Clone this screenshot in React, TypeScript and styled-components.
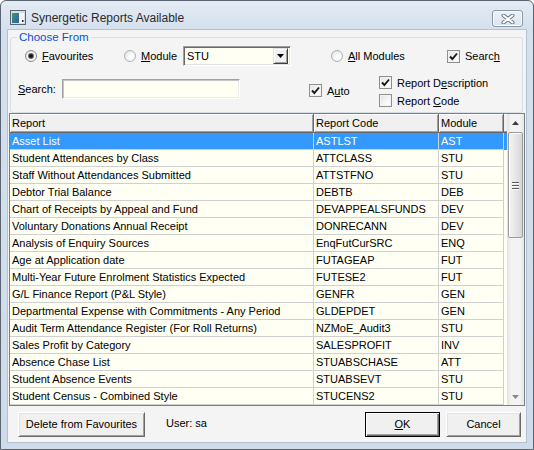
import styled, { createGlobalStyle } from "styled-components";

const GlobalStyle = createGlobalStyle`
  html, body { margin: 0; padding: 0; background: #ffffff; }
  body { font-family: "Liberation Sans", Arial, sans-serif; font-size: 11px; color: #000; }
  * { box-sizing: border-box; }
`;

const Window = styled.div`
  width: 534px;
  height: 450px;
  border: 1px solid #5b6470;
  border-radius: 6px 6px 0 0;
  background: linear-gradient(#e3ebf4, #d4e0ed 30px, #cedbea);
  padding: 0 7px 7px;
  display: flex;
  flex-direction: column;
`;

const TitleBar = styled.div`
  height: 29px;
  padding-top: 4px;
  display: flex;
  align-items: center;
  flex: none;
`;

const TitleText = styled.span`
  margin-left: 5px;
  font-size: 12px;
  color: #2a2a2a;
`;

const CloseButton = styled.div`
  margin-left: auto;
  margin-right: 3px;
  align-self: flex-start;
  margin-top: 5px;
  width: 31px;
  height: 17px;
  border: 1px solid #8b98a9;
  border-radius: 3px;
  background: linear-gradient(#eef2f7, #dbe3ec);
  box-shadow: inset 0 0 0 1px #f7f9fc;
  display: flex;
  align-items: center;
  justify-content: center;
`;

const Client = styled.div`
  flex: 1;
  background: #f4f4f4;
  box-shadow: 0 0 0 1px #b3c2d3;
  display: flex;
  flex-direction: column;
  padding: 0 1px;
`;

const GroupBox = styled.fieldset`
  margin: 0 2px 0 1px;
  padding: 0 0 2px;
  border: 1px solid #d5dfe5;
  border-radius: 3px;
  min-width: 0;
  flex: none;
`;

const GroupLegend = styled.legend`
  margin-left: 6px;
  padding: 0 2px;
  color: #0a4fd6;
  font-size: 11.5px;
  line-height: 14px;
`;

const OptionRow = styled.div`
  display: flex;
  align-items: center;
  height: 20px;
  margin-top: 2px;
  padding-left: 14px;
`;

const SearchRow = styled.div`
  display: flex;
  align-items: flex-start;
  height: 35px;
  margin-top: 9px;
  padding-left: 7px;
`;

const Option = styled.label<{ $w?: number; $ml?: number; $mt?: number }>`
  display: flex;
  align-items: center;
  gap: 5px;
  flex: none;
  width: ${(p) => (p.$w ? `${p.$w}px` : "auto")};
  margin-left: ${(p) => p.$ml ?? 0}px;
  margin-top: ${(p) => p.$mt ?? 0}px;
  height: 13px;
`;

const OptionStack = styled.div`
  display: flex;
  flex-direction: column;
  gap: 5px;
  margin-top: 1px;
`;

const Key = styled.span`
  text-decoration: underline;
`;

const RadioCircle = styled.span<{ $on?: boolean }>`
  width: 12px;
  height: 12px;
  flex: none;
  border-radius: 50%;
  border: 1px solid ${(p) => (p.$on ? "#8a8a8a" : "#b0b0b0")};
  background: radial-gradient(circle at 65% 65%, #ffffff 20%, #e2e2e2 90%);
  display: flex;
  align-items: center;
  justify-content: center;
`;

const RadioDot = styled.span`
  width: 4px;
  height: 4px;
  border-radius: 50%;
  background: #151515;
  box-shadow: 0 0 0 1px #6d6d6d;
`;

const CheckBox = styled.span`
  width: 13px;
  height: 13px;
  flex: none;
  border: 1px solid #8e8f8f;
  background: linear-gradient(135deg, #e1e1e1, #fbfbfb 70%);
  box-shadow: inset 0 0 0 1px #f2f2f2;
  display: flex;
  align-items: center;
  justify-content: center;
`;

const Combo = styled.div`
  width: 108px;
  height: 20px;
  margin-left: 0;
  display: flex;
  align-items: center;
  background: #fffff4;
  border: 1px solid;
  border-color: #a0a0a0 #ffffff #ffffff #a0a0a0;
  box-shadow: inset 1px 1px #696969, inset -1px -1px #e3e3e3;
  padding: 2px 2px 2px 3px;
`;

const ComboText = styled.span`
  flex: 1;
`;

const DropButton = styled.span`
  width: 15px;
  height: 16px;
  background: #f0f0f0;
  border: 1px solid;
  border-color: #e3e3e3 #404040 #404040 #e3e3e3;
  box-shadow: inset 1px 1px #ffffff, inset -1px -1px #a0a0a0;
  display: flex;
  align-items: center;
  justify-content: center;
`;

const FieldLabel = styled.span`
  width: 44px;
  line-height: 20px;
  margin-top: 4px;
  flex: none;
`;

const TextInput = styled.div`
  width: 178px;
  height: 20px;
  margin-top: 4px;
  flex: none;
  background: #fffff4;
  border: 1px solid;
  border-color: #a0a0a0 #ffffff #ffffff #a0a0a0;
  box-shadow: inset 1px 1px #c4c4c4, inset -1px -1px #ececec;
`;

const ListFrame = styled.div`
  height: 293px;
  flex: none;
  border: 1px solid #7a7f86;
  display: flex;
  background: #fffff4;
`;

const ListBody = styled.div`
  width: 497px;
  display: flex;
  flex-direction: column;
`;

const HeaderRow = styled.div`
  display: grid;
  grid-template-columns: 304px 125px 65px 3px;
  height: 19px;
`;

const HeaderCell = styled.div`
  background: #f0f0f0;
  border-right: 1px solid #696969;
  border-bottom: 1px solid #696969;
  box-shadow: inset 1px 1px #ffffff, inset -1px -1px #a0a0a0;
  padding-left: 2px;
  line-height: 18px;
  white-space: nowrap;
`;

const HeaderFiller = styled.div`
  background: #f0f0f0;
  border-bottom: 1px solid #696969;
  box-shadow: inset 0 1px #ffffff, inset 0 -1px #a0a0a0;
`;

const Row = styled.div<{ $selected?: boolean }>`
  display: grid;
  grid-template-columns: 304px 125px 65px;
  height: 17px;
  background: ${(p) => (p.$selected ? "#3399ff" : "#fffff4")};
  color: ${(p) => (p.$selected ? "#ffffff" : "#000000")};
`;

const Cell = styled.div`
  border-right: 1px solid #d0d0d0;
  border-bottom: 1px solid #d0d0d0;
  padding-left: 2px;
  line-height: 16px;
  white-space: nowrap;
  overflow: hidden;
`;

const ScrollBar = styled.div`
  width: 17px;
  display: flex;
  flex-direction: column;
  background: linear-gradient(to right, #e3e3e3, #f3f3f3 4px, #f3f3f3 13px, #e6e6e6);
`;

const ScrollArrow = styled.div`
  height: 17px;
  flex: none;
  display: flex;
  align-items: center;
  justify-content: center;
`;

const ScrollTrack = styled.div`
  flex: 1;
  display: flex;
  flex-direction: column;
  padding: 1px 1px 0;
`;

const Thumb = styled.div`
  height: 106px;
  border: 1px solid #9b9b9b;
  border-radius: 2px;
  background: linear-gradient(to right, #f4f4f4, #e6e6e6 50%, #d6d6d6);
  box-shadow: inset 1px 1px #ffffff;
  display: flex;
  flex-direction: column;
  align-items: center;
  justify-content: center;
  gap: 2px;
`;

const Grip = styled.span`
  width: 7px;
  height: 1px;
  background: #5a5a5a;
  box-shadow: 0 1px #ffffff;
`;

const Footer = styled.div`
  flex: 1;
  display: flex;
  align-items: center;
  padding: 0 4px 0 9px;
`;

const Button = styled.div<{ $w: number; $default?: boolean; $ml?: number }>`
  width: ${(p) => p.$w}px;
  height: 25px;
  margin-left: ${(p) => (p.$ml !== undefined ? `${p.$ml}px` : "0")};
  display: flex;
  align-items: center;
  justify-content: center;
  background: #f0f0f0;
  border: 1px solid;
  border-color: ${(p) => (p.$default ? "#000000" : "#ffffff #696969 #696969 #ffffff")};
  box-shadow: ${(p) =>
    p.$default
      ? "inset 1px 1px #ffffff, inset -1px -1px #696969, inset -2px -2px #a0a0a0"
      : "inset 1px 1px #e3e3e3, inset -1px -1px #a0a0a0"};
  white-space: nowrap;
`;

const UserLabel = styled.span`
  margin-left: 21px;
  margin-top: -3px;
`;

const Spacer = styled.div`
  flex: 1;
`;

const Check = () => (
  <svg width="9" height="9" viewBox="0 0 9 9">
    <path d="M1 4.5 L3.4 7 L8 1.5" fill="none" stroke="#1a1a1a" strokeWidth="1.9" />
  </svg>
);

const Radio = ({ on }: { on?: boolean }) => (
  <RadioCircle $on={on}>{on && <RadioDot />}</RadioCircle>
);

const Arrow = ({ up }: { up?: boolean }) => (
  <svg width="7" height="4" viewBox="0 0 7 4">
    <path d={up ? "M0 4 L3.5 0 L7 4 Z" : "M0 0 L3.5 4 L7 0 Z"} fill={up ? "#3c3c3c" : "#8a8a8a"} />
  </svg>
);

const rows: [string, string, string][] = [
  ["Asset List", "ASTLST", "AST"],
  ["Student Attendances by Class", "ATTCLASS", "STU"],
  ["Staff Without Attendances Submitted", "ATTSTFNO", "STU"],
  ["Debtor Trial Balance", "DEBTB", "DEB"],
  ["Chart of Receipts by Appeal and Fund", "DEVAPPEALSFUNDS", "DEV"],
  ["Voluntary Donations Annual Receipt", "DONRECANN", "DEV"],
  ["Analysis of Enquiry Sources", "EnqFutCurSRC", "ENQ"],
  ["Age at Application date", "FUTAGEAP", "FUT"],
  ["Multi-Year Future Enrolment Statistics Expected", "FUTESE2", "FUT"],
  ["G/L Finance Report (P&L Style)", "GENFR", "GEN"],
  ["Departmental Expense with Commitments - Any Period", "GLDEPDET", "GEN"],
  ["Audit Term Attendance Register (For Roll Returns)", "NZMoE_Audit3", "STU"],
  ["Sales Profit by Category", "SALESPROFIT", "INV"],
  ["Absence Chase List", "STUABSCHASE", "ATT"],
  ["Student Absence Events", "STUABSEVT", "STU"],
  ["Student Census - Combined Style", "STUCENS2", "STU"],
];

export default function App() {
  return (
    <>
      <GlobalStyle />
      <Window>
        <TitleBar>
          <svg width="16" height="15" viewBox="0 0 16 15" style={{ marginLeft: 2 }}>
            <defs>
              <linearGradient id="appIcon" x1="0" y1="0" x2="1" y2="1">
                <stop offset="0" stopColor="#3b9a78" />
                <stop offset="1" stopColor="#2b5ea6" />
              </linearGradient>
            </defs>
            <rect x="0.5" y="0.5" width="15" height="14" fill="#d9dee3" stroke="#5d6670" />
            <rect x="2" y="3" width="7" height="10" fill="url(#appIcon)" />
            <rect x="9" y="3" width="5" height="10" fill="#f4f6f8" />
            <rect x="12" y="10" width="1.5" height="2" fill="#1d1d1d" />
          </svg>
          <TitleText>Synergetic Reports Available</TitleText>
          <CloseButton>
            <svg width="14" height="10" viewBox="0 0 14 10">
              <path d="M2.5 1.5 L11.5 8.5 M11.5 1.5 L2.5 8.5" stroke="#6b7a8c" strokeWidth="4" strokeLinecap="round" />
              <path d="M2.5 1.5 L11.5 8.5 M11.5 1.5 L2.5 8.5" stroke="#ffffff" strokeWidth="2" strokeLinecap="round" />
            </svg>
          </CloseButton>
        </TitleBar>
        <Client>
          <GroupBox>
            <GroupLegend>Choose From</GroupLegend>
            <OptionRow>
              <Option $w={99}>
                <Radio on />
                <span><Key>F</Key>avourites</span>
              </Option>
              <Option $w={59}>
                <Radio />
                <span><Key>M</Key>odule</span>
              </Option>
              <Combo>
                <ComboText>STU</ComboText>
                <DropButton>
                  <svg width="7" height="4" viewBox="0 0 7 4">
                    <path d="M0 0 L3.5 4 L7 0 Z" fill="#000" />
                  </svg>
                </DropButton>
              </Combo>
              <Option $w={116} $ml={40}>
                <Radio />
                <span><Key>A</Key>ll Modules</span>
              </Option>
              <Option>
                <CheckBox><Check /></CheckBox>
                <span>Searc<Key>h</Key></span>
              </Option>
            </OptionRow>
            <SearchRow>
              <FieldLabel><Key>S</Key>earch:</FieldLabel>
              <TextInput />
              <Option $w={70} $ml={69} $mt={9}>
                <CheckBox><Check /></CheckBox>
                <span>A<Key>u</Key>to</span>
              </Option>
              <OptionStack>
                <Option>
                  <CheckBox><Check /></CheckBox>
                  <span>Report D<Key>e</Key>scription</span>
                </Option>
                <Option>
                  <CheckBox />
                  <span>Report <Key>C</Key>ode</span>
                </Option>
              </OptionStack>
            </SearchRow>
          </GroupBox>
          <ListFrame>
            <ListBody>
              <HeaderRow>
                <HeaderCell>Report</HeaderCell>
                <HeaderCell>Report Code</HeaderCell>
                <HeaderCell>Module</HeaderCell>
                <HeaderFiller />
              </HeaderRow>
              {rows.map(([name, code, mod], i) => (
                <Row key={code} $selected={i === 0}>
                  <Cell>{name}</Cell>
                  <Cell>{code}</Cell>
                  <Cell>{mod}</Cell>
                </Row>
              ))}
            </ListBody>
            <ScrollBar>
              <ScrollArrow><Arrow up /></ScrollArrow>
              <ScrollTrack>
                <Thumb>
                  <Grip />
                  <Grip />
                  <Grip />
                </Thumb>
              </ScrollTrack>
              <ScrollArrow><Arrow /></ScrollArrow>
            </ScrollBar>
          </ListFrame>
          <Footer>
            <Button $w={127}>Delete from Favourites</Button>
            <UserLabel>User: sa</UserLabel>
            <Spacer />
            <Button $w={75} $default>
              <span><Key>O</Key>K</span>
            </Button>
            <Button $w={75} $ml={6}>Cancel</Button>
          </Footer>
        </Client>
      </Window>
    </>
  );
}
